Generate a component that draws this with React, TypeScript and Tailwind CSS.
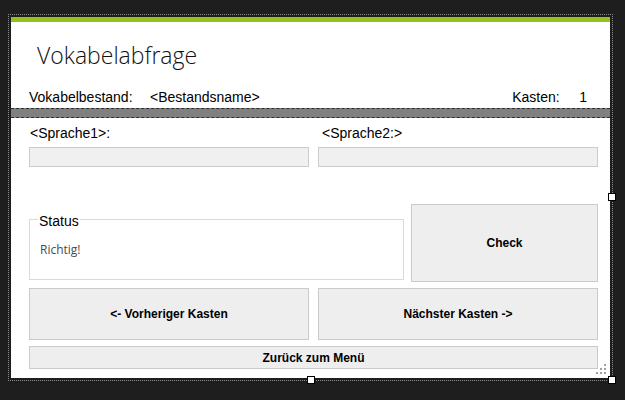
import React from 'react';

const sans = "font-['Liberation_Sans',Arial,sans-serif]";

const Handle: React.FC<{ className: string }> = ({ className }) => (
  <div className={`absolute w-[8px] h-[8px] bg-white border border-black ${className}`} />
);

export default function App() {
  return (
    <div className={`relative w-[625px] h-[400px] bg-[#1e1e1e] pl-[8px] pt-[14px] overflow-hidden ${sans}`}>
      {/* designer selection frame */}
      <div className="w-[605px] h-[367px] border border-dotted border-[#8c8c8c] p-[2px]">
        <div className="w-[599px] h-[361px] bg-white flex flex-col text-black">
          <div className="h-[5px] bg-[#94c11a]" />

          {/* Title */}
          <div className="mt-[17px] h-[32px] pl-[26px] leading-[32px] text-[23px] font-light text-[#111] font-['Open_Sans',sans-serif]">
            Vokabelabfrage
          </div>

          {/* Info row */}
          <div className="mt-[18px] h-[16px] leading-[16px] text-[14px] flex pl-[18px] pr-[23px]">
            <span className="w-[121px]">Vokabelbestand:</span>
            <span className="flex-1">&lt;Bestandsname&gt;</span>
            <span className="w-[67px]">Kasten:</span>
            <span>1</span>
          </div>

          {/* Splitter band */}
          <div className="mt-[3px] h-[10px] bg-[#808080] border-y border-dashed border-[#2e2e2e]" />

          {/* Body */}
          <div className="flex flex-col pl-[18px] pr-[12px]">
            <div className="mt-[7px] grid grid-cols-2 gap-x-[9px] text-[14px] leading-[16px]">
              <span className="pl-[1px]">&lt;Sprache1&gt;:</span>
              <span className="pl-[4px]">&lt;Sprache2:&gt;</span>
            </div>
            <div className="mt-[6px] grid grid-cols-2 gap-x-[9px]">
              <div className="h-[20px] bg-[#f0f0f0] border border-[#cccccc]" />
              <div className="h-[20px] bg-[#f0f0f0] border border-[#cccccc]" />
            </div>

            <div className="mt-[37px] flex items-end gap-[7px]">
              <div className="relative w-[375px] h-[61px] mb-[2px] border border-[#dadada] pl-[10px] pt-[22px]">
                <span className="absolute left-[8px] top-[-7px] bg-white px-[1px] text-[14px] leading-[16px]">
                  Status
                </span>
                <span className="block text-[12px] leading-[16px] text-[#4a4a4a] font-['Open_Sans',sans-serif]">
                  Richtig!
                </span>
              </div>
              <button className="flex-1 h-[78px] bg-[#eeeeee] border border-[#cacaca] text-[12px] font-bold">
                Check
              </button>
            </div>

            <div className="mt-[6px] grid grid-cols-2 gap-x-[9px]">
              <button className="h-[52px] bg-[#eeeeee] border border-[#cacaca] text-[12px] font-bold">
                &lt;- Vorheriger Kasten
              </button>
              <button className="h-[52px] bg-[#eeeeee] border border-[#cacaca] text-[12px] font-bold">
                Nächster Kasten -&gt;
              </button>
            </div>

            <button className="mt-[6px] h-[23px] bg-[#eeeeee] border border-[#cacaca] text-[12px] font-bold">
              Zurück zum Menü
            </button>
          </div>
        </div>
      </div>

      {/* resize grip */}
      <svg className="absolute left-[596px] top-[364px]" width="10" height="10" viewBox="0 0 10 10">
        <g fill="#a0a0a0">
          <rect x="8" y="0" width="2" height="2" />
          <rect x="4" y="4" width="2" height="2" />
          <rect x="8" y="4" width="2" height="2" />
          <rect x="0" y="8" width="2" height="2" />
          <rect x="4" y="8" width="2" height="2" />
          <rect x="8" y="8" width="2" height="2" />
        </g>
      </svg>

      {/* selection handles */}
      <Handle className="left-[608px] top-[193px]" />
      <Handle className="left-[307px] top-[376px]" />
      <Handle className="left-[608px] top-[376px]" />
    </div>
  );
}
